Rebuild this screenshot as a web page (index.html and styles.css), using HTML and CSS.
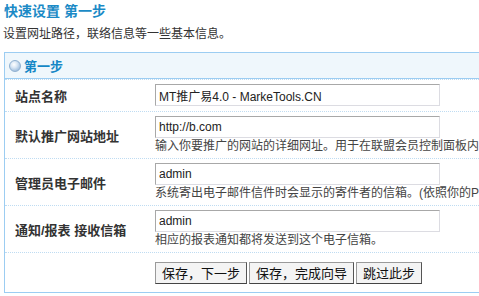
FILE: index.html
```html
<!DOCTYPE html>
<html lang="zh-CN">
<head>
    <meta charset="UTF-8">
    <title>快速设置 第一步</title>
    <link rel="stylesheet" href="styles.css">
</head>
<body>
    <h1 class="page-title">快速设置 第一步</h1>
    <p class="page-desc">设置网址路径，联络信息等一些基本信息。</p>

    <div class="panel">
        <div class="panel-head">
            <span class="ball"></span>
            <span class="panel-title">第一步</span>
        </div>

        <div class="row">
            <div class="label">站点名称</div>
            <div class="field">
                <input type="text" class="text-input" value="MT推广易4.0 - MarkeTools.CN">
            </div>
        </div>

        <div class="row">
            <div class="label">默认推广网站地址</div>
            <div class="field">
                <input type="text" class="text-input" value="http://b.com">
                <div class="hint">输入你要推广的网站的详细网址。用于在联盟会员控制面板内显示推广链接。</div>
            </div>
        </div>

        <div class="row">
            <div class="label">管理员电子邮件</div>
            <div class="field">
                <input type="text" class="text-input" value="admin">
                <div class="hint">系统寄出电子邮件信件时会显示的寄件者的信箱。(依照你的PHP设置)</div>
            </div>
        </div>

        <div class="row">
            <div class="label">通知/报表 接收信箱</div>
            <div class="field">
                <input type="text" class="text-input" value="admin">
                <div class="hint">相应的报表通知都将发送到这个电子信箱。</div>
            </div>
        </div>

        <div class="row row-buttons">
            <div class="label"></div>
            <div class="field buttons">
                <button class="btn">保存，下一步</button>
                <button class="btn">保存，完成向导</button>
                <button class="btn">跳过此步</button>
            </div>
        </div>
    </div>
</body>
</html>
```

FILE: styles.css
```css
html {
    overflow: hidden;
}
body {
    margin: 0;
    padding: 0 0 0 4px;
    font-family: "Liberation Sans", "Noto Sans CJK SC", sans-serif;
    font-size: 12px;
    color: #333;
    background-color: #fff;
}
.page-title {
    margin: 0;
    padding-top: 2px;
    font-size: 14px;
    line-height: 18px;
    font-weight: bold;
    color: #1b8ac6;
}
.page-desc {
    margin: 5px 0 0 -1px;
    line-height: 18px;
    color: #333;
}
.panel {
    width: 560px;
    margin-top: 9px;
    border: 1px solid #9ccdf2;
}
.panel-head {
    display: flex;
    align-items: center;
    height: 25px;
    padding-left: 4px;
    background-color: #eff7fc;
    border-bottom: 1px solid #9ccdf2;
}
.ball {
    width: 12px;
    height: 12px;
    border-radius: 50%;
    box-sizing: border-box;
    border: 1px solid #8fb0d0;
    background: radial-gradient(circle at 40% 35%, #ffffff 0%, #dbe8f5 35%, #9bbbdc 80%, #7fa3c9 100%);
}
.panel-title {
    margin-left: 3px;
    font-size: 13px;
    font-weight: bold;
    color: #1587c6;
}
.row {
    display: flex;
    border-top: 1px dotted #bfdcf2;
}
.label {
    width: 140px;
    padding-left: 10px;
    display: flex;
    align-items: center;
    font-size: 13px;
    font-weight: bold;
    color: #333;
}
.field {
    padding: 4px 0 5px;
}
.text-input {
    display: block;
    width: 285px;
    height: 22px;
    box-sizing: border-box;
    margin: 0;
    padding: 0 3px;
    border: 1px solid;
    border-color: #a8a8a8 #dcdce2 #dcdce2 #a8a8a8;
    font-family: "Liberation Sans", "Noto Sans CJK SC", sans-serif;
    font-size: 12px;
    color: #222;
    background-color: #fff;
}
.hint {
    margin-top: 1px;
    line-height: 14px;
    white-space: nowrap;
    color: #444;
}
.row-buttons .field {
    padding: 9px 0 8px;
}
.buttons {
    display: flex;
    gap: 2px;
}
.btn {
    height: 22px;
    margin: 0;
    padding: 0 6px;
    border: 1px solid;
    border-color: #9a9a9a #555 #444 #9a9a9a;
    background-color: #f4f4f4;
    font-family: "Noto Sans CJK SC", sans-serif;
    font-size: 13px;
    line-height: 18px;
    color: #111;
}
```
